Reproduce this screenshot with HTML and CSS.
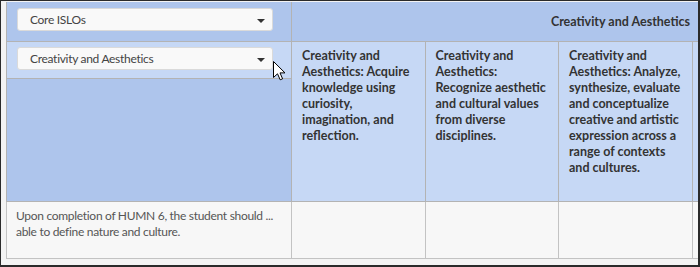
FILE: index.html
```html
<!DOCTYPE html>
<html lang="en">
<head>
    <meta charset="UTF-8">
    <meta name="viewport" content="width=device-width, initial-scale=1.0">
    <title>ISLO Mapping</title>
    <link rel="stylesheet" href="styles.css">
</head>
<body>
    <div class="frame">
        <table class="mapping">
            <colgroup>
                <col class="col-outcome">
                <col class="col-islo">
                <col class="col-islo">
                <col class="col-islo">
                <col class="col-rest">
            </colgroup>
            <tr class="row-group">
                <td class="cell-filter">
                    <div class="select">Core ISLOs<span class="caret"></span></div>
                </td>
                <th class="group-title" colspan="3">Creativity and Aesthetics</th>
                <td class="group-rest"></td>
            </tr>
            <tr class="row-islo">
                <td class="cell-side">
                    <div class="filter-band">
                        <div class="select">Creativity and Aesthetics<span class="caret"></span></div>
                    </div>
                </td>
                <th>Creativity and Aesthetics: Acquire knowledge using curiosity, imagination, and reflection.</th>
                <th>Creativity and Aesthetics: Recognize aesthetic and cultural values from diverse disciplines.</th>
                <th>Creativity and Aesthetics: Analyze, synthesize, evaluate and conceptualize creative and artistic expression across a range of contexts and cultures.</th>
                <th></th>
            </tr>
            <tr class="row-outcome">
                <td class="outcome-text">Upon completion of HUMN 6, the student should&nbsp;... able to define nature and culture.</td>
                <td></td>
                <td></td>
                <td></td>
                <td></td>
            </tr>
        </table>

        <!-- mouse pointer over the second dropdown -->
        <svg class="pointer" width="13" height="20" viewBox="0 0 13 20">
            <path d="M0.5 0.5 L0.5 16.5 L4.5 12.8 L7.2 18.8 L9.6 17.8 L7 11.9 L12 11.9 Z" fill="#fff" stroke="#000" stroke-width="1" stroke-linejoin="miter"/>
        </svg>
    </div>
</body>
</html>
```

FILE: styles.css
```css
* {
    box-sizing: border-box;
}

body {
    margin: 0;
    padding: 0;
    background: #fff;
}

.frame {
    position: relative;
    width: 700px;
    height: 267px;
    overflow: hidden;
    background: #f3f3f3;
    border-top: 1px solid #2a2a2a;
    border-left: 1px solid #2a2a2a;
    border-right: 2px solid #2a2a2a;
    border-bottom: 2px solid #2a2a2a;
    padding: 1px 0 0 5px;
    font-family: Lato, "Noto Sans", Arial, sans-serif;
    font-size: 12.5px;
    color: #333;
}

.mapping {
    border-collapse: collapse;
    table-layout: fixed;
    width: 720px;
}

.col-outcome {
    width: 285px;
}

.col-islo {
    width: 133.5px;
}

.col-rest {
    width: 34px;
}

.mapping td,
.mapping th {
    border: 1px solid #b3b3b3;
    padding: 0;
    vertical-align: top;
    text-align: left;
}

.row-group td,
.row-group th {
    height: 39px;
    background: #aec5ec;
    border-top: none;
}

.group-title {
    text-align: right !important;
    vertical-align: middle !important;
    padding-right: 2px !important;
    font-weight: bold;
    border-right: none !important;
}

.group-rest {
    border-left: none !important;
}

.cell-filter {
    padding: 6px 0 0 10px !important;
}

.select {
    position: relative;
    width: 256px;
    height: 23px;
    padding: 3px 0 0 12px;
    background: #f9f9f9;
    border: 1px solid #dadada;
    border-radius: 3px;
    color: #444;
    font-size: 12px;
    letter-spacing: -0.3px;
    line-height: 16px;
}

.caret {
    position: absolute;
    right: 7px;
    top: 10px;
    border-left: 4px solid transparent;
    border-right: 4px solid transparent;
    border-top: 4px solid #333;
}

.row-islo th {
    height: 160px;
    background: #c6d8f5;
    padding: 6px 10px 0 10px;
    font-weight: bold;
    line-height: 16px;
}

.mapping .cell-side {
    background: #aec5ec;
}

.filter-band {
    height: 37px;
    padding: 5px 0 0 10px;
    background: #c6d8f5;
    border-bottom: 1px solid #b3b3b3;
}

.row-outcome td {
    height: 57px;
    background: #f7f7f7;
    border-color: #c3c3c3;
}

.mapping .outcome-text {
    padding: 6px 2px 0 9px;
    color: #555;
    font-size: 12px;
    letter-spacing: -0.3px;
    line-height: 16px;
}

.pointer {
    position: absolute;
    left: 272px;
    top: 60px;
}
```
